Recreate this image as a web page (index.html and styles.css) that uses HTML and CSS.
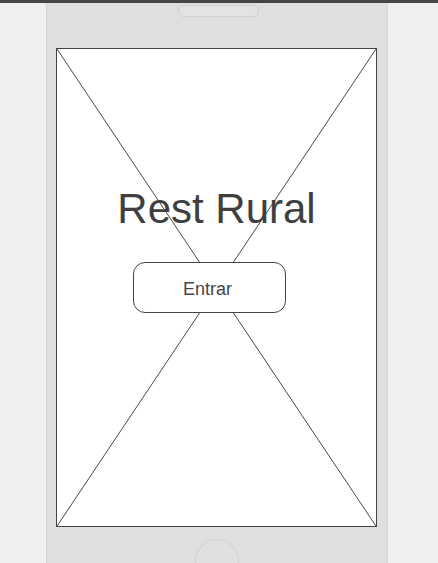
FILE: index.html
```html
<!DOCTYPE html>
<html lang="pt">
<head>
<meta charset="utf-8">
<title>Rest Rural</title>
<link rel="stylesheet" href="styles.css">
</head>
<body>
<div class="topbar"></div>
<div class="phone">
  <div class="speaker"></div>
  <div class="screen">
    <svg class="cross" viewBox="0 0 100 100" preserveAspectRatio="none" aria-hidden="true">
      <line x1="0" y1="0" x2="100" y2="100" vector-effect="non-scaling-stroke"/>
      <line x1="100" y1="0" x2="0" y2="100" vector-effect="non-scaling-stroke"/>
    </svg>
    <div class="title-cell"><h1 class="title">Rest Rural</h1></div>
    <div class="button-cell"><button class="enter">Entrar</button></div>
    <div class="spacer"></div>
  </div>
  <div class="home"></div>
</div>
</body>
</html>
```
FILE: styles.css
```css
html, body {
  margin: 0;
  padding: 0;
}
body {
  background: #efefef;
  font-family: "Liberation Sans", Arial, sans-serif;
  height: 563px;
  overflow: hidden;
}
.topbar {
  height: 3px;
  background: #454545;
}
.phone {
  margin-left: 46px;
  width: 340px;
  height: 580px;
  background: #dfdfdf;
  border-left: 1px solid #d4d4d4;
  border-right: 1px solid #d4d4d4;
  display: flex;
  flex-direction: column;
}
.speaker {
  margin: 2px 0 0 131px;
  width: 79px;
  height: 10px;
  border: 1px solid #d0d0d0;
  border-radius: 6px;
  background: #e3e3e3;
}
.screen {
  position: relative;
  margin: 31px 0 0 9px;
  width: 319px;
  height: 478px;
  border: 1px solid #444;
  background: #fff;
  display: grid;
  grid-template-rows: 1fr auto 1fr;
  justify-items: center;
}
.cross {
  position: absolute;
  inset: 0;
  width: 100%;
  height: 100%;
}
.cross line {
  stroke: #4a4a4a;
  stroke-width: 1;
}
.title-cell {
  position: relative;
  align-self: end;
  margin-bottom: 32px;
}
.title {
  margin: 0;
  font-size: 42px;
  line-height: 42px;
  font-weight: normal;
  color: #3f3f3f;
}
.button-cell {
  position: relative;
  justify-self: start;
  margin-left: 76px;
}
.enter {
  display: block;
  width: 153px;
  height: 51px;
  border: 1px solid #444;
  border-radius: 12px;
  background: #fff;
  font-family: "Liberation Sans", Arial, sans-serif;
  font-size: 18px;
  color: #444;
  padding: 3px 4px 0 0;
}
.home {
  margin: 12px 0 0 148px;
  width: 42px;
  height: 42px;
  border: 1px solid #d2d2d2;
  border-radius: 50%;
  background: #e0e0e0;
}
```
